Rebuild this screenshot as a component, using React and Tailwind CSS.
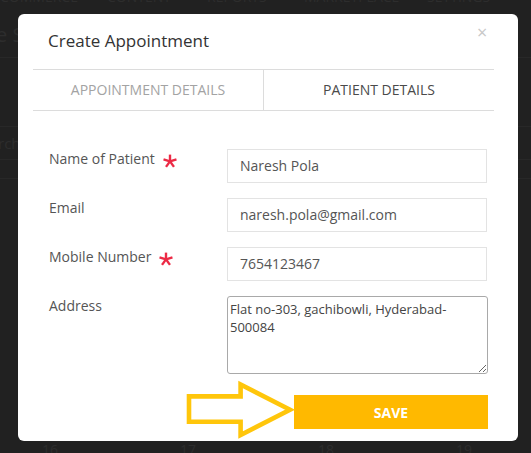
import React from "react";

function Asterisk() {
  const r = 6.8;
  const cx = 8;
  const cy = 7.4;
  const arms = [0, 72, 144, 216, 288].map((a) => {
    const rad = (a * Math.PI) / 180;
    return [cx + r * Math.sin(rad), cy - r * Math.cos(rad)];
  });
  return (
    <svg width="16" height="15" viewBox="0 0 16 15" className="mt-[5px] ml-[7px] shrink-0">
      {arms.map(([x, y], i) => (
        <line key={i} x1={cx} y1={cy} x2={x} y2={y} stroke="#ec2a45" strokeWidth="2.4" strokeLinecap="butt" />
      ))}
    </svg>
  );
}

function Row({ label, required, children }) {
  return (
    <div className="flex items-start">
      <div className="w-[178px] flex items-start">
        <span className="text-[14px] leading-[20px] text-[#555]">{label}</span>
        {required && <Asterisk />}
      </div>
      {children}
    </div>
  );
}

function Input({ value }) {
  return (
    <div className="w-[260px] h-[34px] border border-[#e3e3e3] flex items-center pl-[12px] text-[14px] leading-[20px] text-[#555]">
      {value}
    </div>
  );
}

export default function App() {
  return (
    <div
      className="relative grid w-[531px] h-[453px] overflow-hidden bg-[#212121]"
      style={{ fontFamily: '"Open Sans", "Noto Sans", sans-serif' }}
    >
      {/* faint page behind the overlay */}
      <div className="col-start-1 row-start-1 flex flex-col text-[#2d2d2d]">
        <div className="-mt-[11px] flex h-[16px] text-[14px] leading-[16px]">
          <span className="w-[107px]">COMMERCE</span>
          <span className="w-[100px]">CONTENT</span>
          <span className="w-[97px]">REPORTS</span>
          <span className="w-[123px]">MARKETPLACE</span>
          <span>SETTINGS</span>
        </div>
        <div className="mt-[18px] text-[20px] leading-[24px] -ml-[4px]">e S</div>
        <div className="mt-[10px] h-px bg-[#282828]" />
        <div className="mt-[68px] h-px bg-[#282828]" />
        <div className="mt-[6px] text-[15px] leading-[20px] -ml-[2px]">rch</div>
        <div className="mt-[6px] h-px bg-[#282828]" />
        <div className="mt-[18px] h-px bg-[#282828]" />
        <div className="mt-auto flex h-[10px] text-[14px] leading-[14px] pl-[42px] gap-[122px]">
          <span>16</span>
          <span>17</span>
          <span>18</span>
          <span>19</span>
        </div>
      </div>

      {/* modal */}
      <div className="col-start-1 row-start-1 self-start ml-[18px] mt-[14px] w-[500px] h-[427px] bg-white rounded-[6px] relative flex flex-col">
        <div className="absolute left-[459px] top-[8px] text-[18px] leading-[20px] text-[#c8c8c8]">×</div>
        <div className="pl-[30px] pt-[15px] h-[55px] text-[17px] leading-[24px] text-[#333]">
          Create Appointment
        </div>
        <div className="ml-[15px] w-[461px] h-[42px] border-y border-[#dcdcdc] flex">
          <div className="flex-1 flex items-center justify-center pb-[1px] text-[14px] text-[#a3a3a3]">
            APPOINTMENT DETAILS
          </div>
          <div className="flex-1 flex items-center justify-center pb-[1px] border-l border-[#dcdcdc] text-[14px] text-[#4a4a4a]">
            PATIENT DETAILS
          </div>
        </div>
        <div className="mt-[38px] pl-[31px] flex flex-col gap-[15px]">
          <Row label="Name of Patient" required>
            <Input value="Naresh Pola" />
          </Row>
          <Row label="Email">
            <Input value="naresh.pola@gmail.com" />
          </Row>
          <Row label="Mobile Number" required>
            <Input value="7654123467" />
          </Row>
          <Row label="Address">
            <textarea
              readOnly
              value="Flat no-303, gachibowli, Hyderabad-500084"
              className="w-[261px] h-[78px] border border-[#a9a9a9] rounded-[3px] px-[2px] pt-[3px] text-[13px] leading-[18px] text-[#444] outline-none"
              style={{ fontFamily: '"Open Sans", sans-serif' }}
            />
          </Row>
        </div>
        <div className="mt-[21px] ml-[276px] w-[194px] h-[34px] bg-[#ffb900] flex items-center justify-center text-white text-[14px] font-bold">
          SAVE
        </div>
      </div>

      {/* annotation arrow */}
      <svg
        className="absolute left-[180px] top-[378px] pointer-events-none"
        width="120"
        height="65"
        viewBox="0 0 120 65"
      >
        <polygon
          points="9,18.4 60.6,18.4 60.6,6.4 110,31.8 60.6,57 60.6,43.8 9,43.8"
          fill="none"
          stroke="#ffc60b"
          strokeWidth="4.6"
          strokeLinejoin="miter"
        />
      </svg>
    </div>
  );
}
